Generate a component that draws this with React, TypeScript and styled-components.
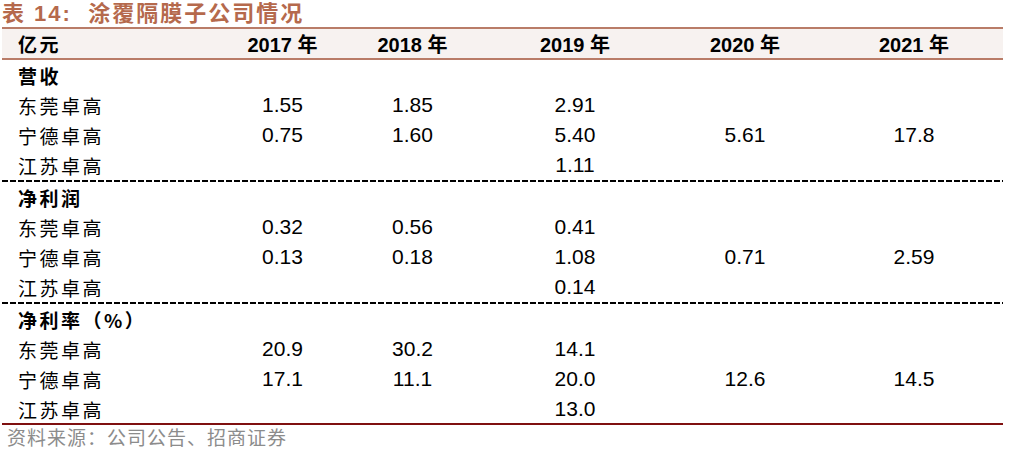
import styled, { createGlobalStyle } from 'styled-components';

const GlobalStyle = createGlobalStyle`
  html, body {
    margin: 0;
    padding: 0;
    background: #ffffff;
  }
  body {
    font-family: "Liberation Sans", "Noto Sans CJK SC", sans-serif;
    color: #000;
  }
`;

interface Section {
  title: string;
  rows: { name: string; values: string[] }[];
}

const years = ['2017 年', '2018 年', '2019 年', '2020 年', '2021 年'];

const sections: Section[] = [
  {
    title: '营收',
    rows: [
      { name: '东莞卓高', values: ['1.55', '1.85', '2.91', '', ''] },
      { name: '宁德卓高', values: ['0.75', '1.60', '5.40', '5.61', '17.8'] },
      { name: '江苏卓高', values: ['', '', '1.11', '', ''] },
    ],
  },
  {
    title: '净利润',
    rows: [
      { name: '东莞卓高', values: ['0.32', '0.56', '0.41', '', ''] },
      { name: '宁德卓高', values: ['0.13', '0.18', '1.08', '0.71', '2.59'] },
      { name: '江苏卓高', values: ['', '', '0.14', '', ''] },
    ],
  },
  {
    title: '净利率（%）',
    rows: [
      { name: '东莞卓高', values: ['20.9', '30.2', '14.1', '', ''] },
      { name: '宁德卓高', values: ['17.1', '11.1', '20.0', '12.6', '14.5'] },
      { name: '江苏卓高', values: ['', '', '13.0', '', ''] },
    ],
  },
];

const Page = styled.div`
  width: 1010px;
  padding: 1px 0 0 2px;
  box-sizing: border-box;
`;

const Title = styled.div`
  height: 26px;
  line-height: 26px;
  font-size: 22px;
  font-weight: bold;
  color: #b5694c;
  font-family: "Liberation Sans", "Noto Sans CJK SC", sans-serif;
  letter-spacing: 2px;
  white-space: nowrap;
`;

const Table = styled.div`
  width: 1001px;
`;

const Row = styled.div<{ $header?: boolean }>`
  display: grid;
  grid-template-columns: 213px 135px 125px 200px 140px 1fr;
  height: 30px;
  align-items: center;
  ${(p) =>
    p.$header &&
    `
    background: #f7f2f0;
    border-top: 2px solid #b97c68;
    border-bottom: 2px solid #b97c68;
    height: 29px;
    font-weight: bold;
  `}
`;

const Label = styled.div<{ $bold?: boolean }>`
  padding-left: 16px;
  font-family: "Noto Sans CJK SC", sans-serif;
  font-size: 19px;
  letter-spacing: 2.5px;
  font-weight: ${(p) => (p.$bold ? 700 : 400)};
`;

const Cell = styled.div<{ $shift?: number }>`
  text-align: center;
  font-size: 21px;
  padding-left: ${(p) => p.$shift ?? 0}px;
`;

const HeadCell = styled.div<{ $shift?: number }>`
  text-align: center;
  font-size: 20px;
  font-weight: bold;
  padding-left: ${(p) => p.$shift ?? 0}px;
  font-family: "Liberation Sans", "Noto Sans CJK SC", sans-serif;
`;

const Dashed = styled.div`
  height: 2px;
  background: repeating-linear-gradient(
    to right,
    #000 0,
    #000 6px,
    transparent 6px,
    transparent 8px
  );
`;

const BottomRule = styled.div`
  height: 2px;
  background: #7f1010;
  margin-top: -1px;
`;

const Source = styled.div`
  padding-left: 5px;
  height: 24px;
  line-height: 24px;
  font-family: "Noto Sans CJK SC", sans-serif;
  font-size: 19px;
  color: #8c8c8c;
  letter-spacing: 1px;
  white-space: nowrap;
`;

const shifts = [0, 0, 0, 0, 10];

export default function App() {
  return (
    <>
      <GlobalStyle />
      <Page>
        <Title>表 14:&nbsp; 涂覆隔膜子公司情况</Title>
        <Table>
          <Row $header>
            <Label $bold>亿元</Label>
            {years.map((y, i) => (
              <HeadCell key={y} $shift={shifts[i]}>
                {y}
              </HeadCell>
            ))}
          </Row>
          {sections.map((s, si) => (
            <div key={s.title}>
              <Row>
                <Label $bold>{s.title}</Label>
              </Row>
              {s.rows.map((r) => (
                <Row key={r.name}>
                  <Label>{r.name}</Label>
                  {r.values.map((v, i) => (
                    <Cell key={i} $shift={shifts[i]}>
                      {v}
                    </Cell>
                  ))}
                </Row>
              ))}
              {si < sections.length - 1 ? <Dashed /> : <BottomRule />}
            </div>
          ))}
        </Table>
        <Source>资料来源：公司公告、招商证券</Source>
      </Page>
    </>
  );
}
